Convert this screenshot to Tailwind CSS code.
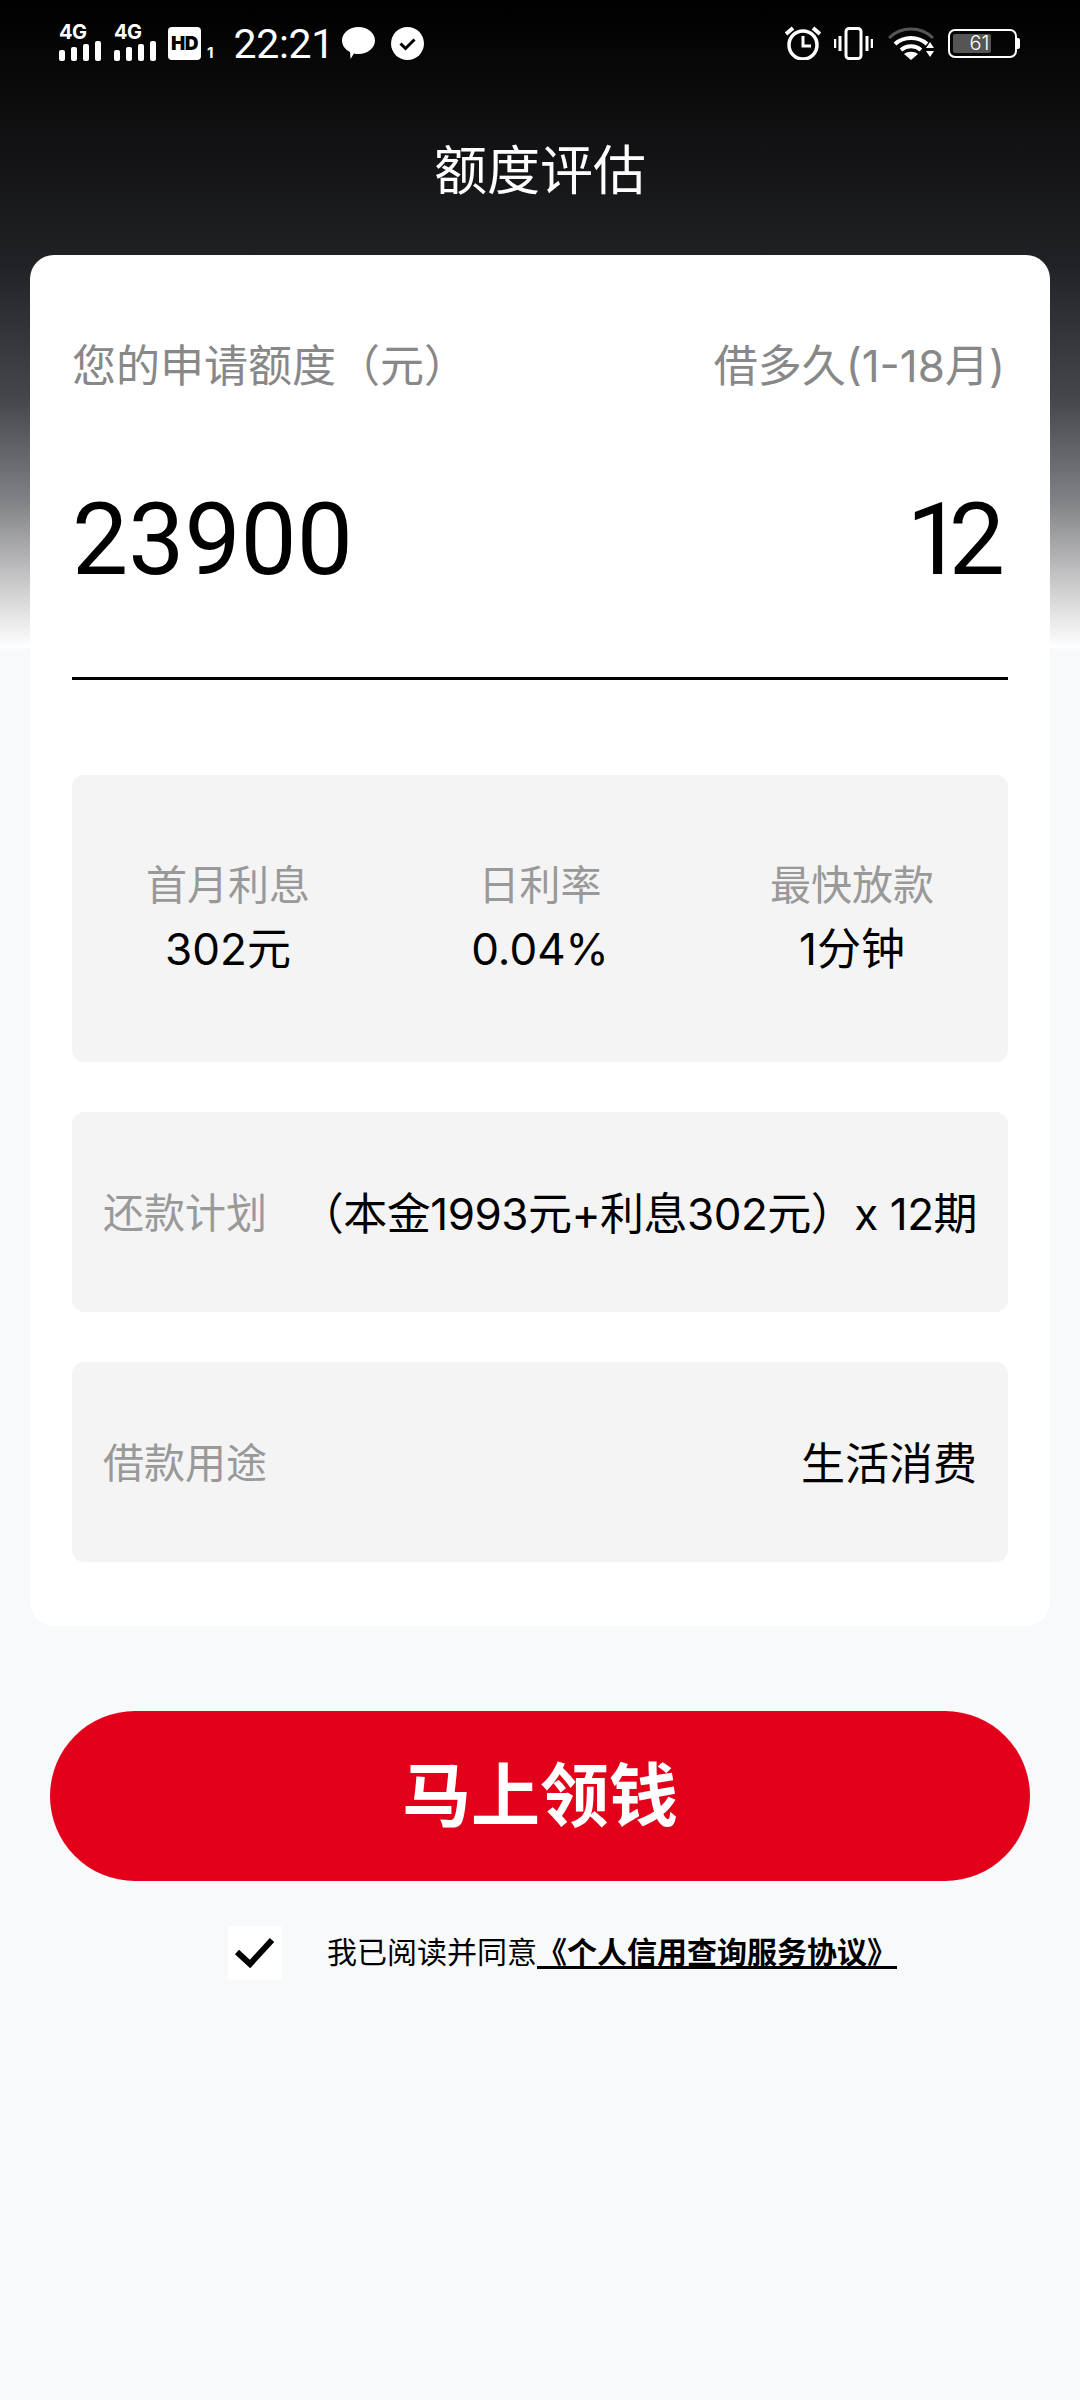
<!DOCTYPE html>
<html lang="zh-CN">
<head>
  <meta charset="UTF-8">
  <title>额度评估</title>
  <meta name="viewport" content="width=device-width, initial-scale=1.0">
  <script src="https://cdn.jsdelivr.net/npm/@tailwindcss/browser@4"></script>
</head>
<body class="font-['Inter','Noto_Sans_CJK_SC',sans-serif]">
  <div class="w-[1080px] h-[2400px] overflow-hidden bg-[linear-gradient(#000_0,#0c0c0d_100px,#202124_260px,#46474b_400px,#808184_500px,#d8d8d9_600px,#fff_648px,#f8f9fb_649px)]">

    <!-- status bar -->
    <div class="h-[86px] pl-[59px] pr-[60px] flex items-center justify-between text-white">
      <div class="flex items-center">
        <div class="w-[55px] flex flex-col">
          <span class="text-[20px] leading-[15px] font-bold tracking-[-0.5px]">4G</span>
          <svg width="42" height="20" class="mt-[1px]" fill="#fff"><rect x="0" y="9" width="6" height="11" rx="2"/><rect x="12" y="6" width="6" height="14" rx="2"/><rect x="24" y="3" width="6" height="17" rx="2"/><rect x="36" y="0" width="6" height="20" rx="2"/></svg>
        </div>
        <div class="w-[54px] flex flex-col">
          <span class="text-[20px] leading-[15px] font-bold tracking-[-0.5px]">4G</span>
          <svg width="42" height="20" class="mt-[1px]" fill="#fff"><rect x="0" y="9" width="6" height="11" rx="2"/><rect x="12" y="6" width="6" height="14" rx="2"/><rect x="24" y="3" width="6" height="17" rx="2"/><rect x="36" y="0" width="6" height="20" rx="2"/></svg>
        </div>
        <div class="w-[33px] h-[33px] bg-white rounded-[4px] flex items-center justify-center text-black text-[19px] font-black leading-none tracking-[-0.5px]">HD</div>
        <span class="ml-[6px] mt-[19px] text-[15px] leading-none font-bold">1</span>
        <span class="ml-[20px] mt-[3px] font-['Roboto'] text-[41px] leading-none tracking-[-0.3px]">22:21</span>
        <svg width="33" height="33" viewBox="0 0 33 33" fill="#fff" class="ml-[8px]"><path d="M16.500 0C25.600 0 33 6 33 13.500S25.600 27 16.500 27c-1.600 0-3.200-.2-4.600-.6L8.600 32 8 25C3.200 22.600 0 18.500 0 13.500 0 6 7.400 0 16.500 0Z"/></svg>
        <svg width="33" height="33" viewBox="0 0 33 33" class="ml-[16px]"><circle cx="16.500" cy="16.500" r="16.500" fill="#fff"/><path d="M9.500 16.500l5 5 9-9" fill="none" stroke="#000" stroke-width="3"/></svg>
      </div>
      <div class="flex items-center">
        <svg width="36" height="34" viewBox="0 0 36 34" fill="none" stroke="#fff"><circle cx="18" cy="19" r="14" stroke-width="3.500"/><path d="M18 10v10h8" stroke-width="3"/><path d="M1 8l7-6M35 8l-7-6" stroke-width="4"/></svg>
        <svg width="39" height="33" viewBox="0 0 39 33" fill="none" stroke="#fff" class="ml-[13px]"><rect x="12" y="1.500" width="15" height="30" rx="3" stroke-width="3"/><path d="M6 9v15M33 9v15" stroke-width="3"/><path d="M1 12v9M38 12v9" stroke-width="2.500"/></svg>
        <svg width="47" height="33" viewBox="0 0 47 33" fill="none" class="ml-[15px]"><path d="M1 11C13-1 33-1 45 11" stroke="#555" stroke-width="3"/><path d="M7 17C16 9 30 9 39 17" stroke="#fff" stroke-width="4"/><path d="M13 23c6-5 14-5 20 0" stroke="#fff" stroke-width="4"/><path d="M16 27c4-3 10-3 14 0l-7 6Z" fill="#fff"/><path d="M42 15l4 6h-8ZM38 24h8l-4 6Z" fill="#fff"/></svg>
        <div class="ml-[13px] flex items-center">
          <div class="w-[69px] h-[29px] border-2 border-white rounded-[7px] p-[3px] relative">
            <div class="w-[38px] h-full bg-[#555] rounded-[2px]"></div>
            <span class="absolute inset-0 flex items-center justify-center pr-[6px] text-[20px] leading-none font-light">61</span>
          </div>
          <div class="w-[3px] h-[11px] bg-white rounded-r-[2px]"></div>
        </div>
      </div>
    </div>

    <!-- title -->
    <div class="h-[169px] pt-[1px] flex items-center justify-center text-white text-[53px] leading-none">额度评估</div>

    <!-- card -->
    <div class="mx-[30px] h-[1371px] bg-white rounded-[24px] px-[42px] pt-[80px]">
      <div class="flex justify-between items-center text-[#888] text-[44px] leading-[62px]">
        <span>您的申请额度（元）</span>
        <span class="mr-[3px]">借多久(1-18月)</span>
      </div>
      <div class="mt-[85px] h-[198px] border-b-[3px] border-black flex justify-between font-['Roboto'] text-[100px] leading-[116px] text-black">
        <span>23900</span>
        <span class="mr-[3px]"><span class="tracking-[-14px]">1</span>2</span>
      </div>

      <div class="mt-[95px] h-[287px] pb-[3px] bg-[#f4f4f4] rounded-[12px] grid grid-cols-3 items-center text-center">
        <div><div class="text-[#999] text-[41px] leading-[64px]">首月利息</div><div class="text-black text-[44px] leading-[64px]">302元</div></div>
        <div><div class="text-[#999] text-[41px] leading-[64px]">日利率</div><div class="text-black text-[44px] leading-[64px]">0.04%</div></div>
        <div><div class="text-[#999] text-[41px] leading-[64px]">最快放款</div><div class="text-black text-[44px] leading-[64px]">1分钟</div></div>
      </div>

      <div class="mt-[50px] h-[200px] pt-[3px] bg-[#f4f4f4] rounded-[12px] px-[31px] flex justify-between items-center">
        <span class="text-[#999] text-[41px]">还款计划</span>
        <span class="text-black text-[44px] tracking-[-0.5px]">（本金1993元+利息302元）x 12期</span>
      </div>

      <div class="mt-[50px] h-[200px] pt-[3px] bg-[#f4f4f4] rounded-[12px] px-[31px] flex justify-between items-center">
        <span class="text-[#999] text-[41px]">借款用途</span>
        <span class="text-black text-[44px]">生活消费</span>
      </div>
    </div>

    <!-- button -->
    <div class="mt-[85px] mx-[50px] h-[170px] rounded-full bg-[#e2001a] flex items-center justify-center text-white text-[69px] font-bold leading-none">马上领钱</div>

    <!-- agreement -->
    <div class="mt-[45px] ml-[228px] flex items-center">
      <div class="w-[54px] h-[54px] bg-white rounded-[2px] flex items-center justify-center">
        <svg width="42" height="32" viewBox="0 0 42 32" fill="none" stroke="#000" stroke-width="6"><path d="M3 15l13 12L38 3"/></svg>
      </div>
      <span class="ml-[45px] -mt-[2px] text-[30px] leading-none text-black">我已阅读并同意<span class="font-bold underline underline-offset-[3px]">《个人信用查询服务协议》</span></span>
    </div>
  </div>
</body>
</html>
